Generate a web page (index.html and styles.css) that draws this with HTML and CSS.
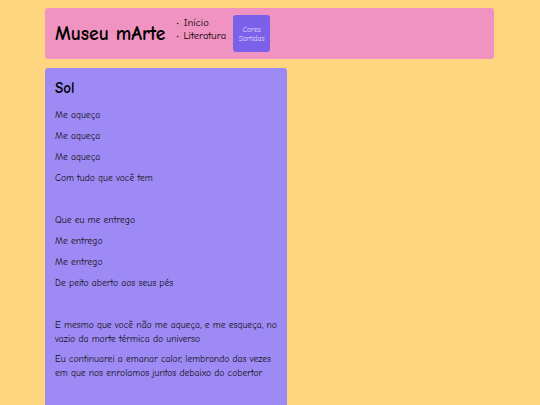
FILE: index.html
```html
<!DOCTYPE html>
<html lang="pt">
<head>
<meta charset="utf-8">
<title>Museu mArte</title>
<link rel="stylesheet" href="styles.css">
</head>
<body>
<header class="topo">
  <h1 class="marca">Museu mArte</h1>
  <ul class="menu">
    <li>Início</li>
    <li>Literatura</li>
  </ul>
  <button class="botao">Cores Sortidas</button>
</header>
<main class="cartao">
  <h2 class="titulo">Sol</h2>
  <p>Me aqueça</p>
  <p>Me aqueça</p>
  <p>Me aqueça</p>
  <p>Com tudo que você tem</p>
  <p class="vazio"></p>
  <p>Que eu me entrego</p>
  <p>Me entrego</p>
  <p>Me entrego</p>
  <p>De peito aberto aos seus pés</p>
  <p class="vazio"></p>
  <p class="longo">E mesmo que você não me aqueça, e me esqueça, no vazio da morte térmica do universo</p>
  <p class="longo">Eu continuarei a emanar calor, lembrando das vezes em que nos enrolamos juntos debaixo do cobertor</p>
</main>
</body>
</html>
```
FILE: styles.css
```css
html, body {
  margin: 0;
  padding: 0;
}
body {
  background: #ffd580;
  font-family: "Comic Sans MS", "Comic Neue", "DejaVu Sans", sans-serif;
  color: #000;
  padding: 8px 46px 0 45px;
  height: 405px;
  box-sizing: border-box;
  overflow: hidden;
}
.topo {
  background: #f093c0;
  border-radius: 3px;
  height: 51px;
  width: 449px;
  box-sizing: border-box;
  display: flex;
  align-items: center;
  padding: 0 10px;
}
.marca {
  margin: 0;
  font-size: 19.5px;
  font-weight: bold;
  color: #000;
}
.menu {
  margin: -8px 0 0 11px;
  padding: 0 0 0 7px;
  font-size: 10.5px;
  line-height: 12px;
  list-style: none;
}
.menu li::before {
  content: "•";
  margin-left: -7px;
  width: 7px;
  display: inline-block;
  font-size: 7px;
}
.botao {
  margin-left: 7px;
  width: 37px;
  height: 37px;
  border: none;
  border-radius: 3px;
  background: #7b61ea;
  color: #e6dcff;
  font-family: inherit;
  font-size: 7.5px;
  line-height: 9px;
  padding: 0 2px;
}
.cartao {
  margin-top: 9px;
  width: 242px;
  height: 337px;
  box-sizing: border-box;
  background: #9e8af5;
  border-radius: 3px 3px 0 0;
  padding: 10px 3px 0 10px;
}
.titulo {
  margin: 0 0 10px;
  font-size: 15px;
  line-height: 20px;
  font-weight: bold;
  color: #000;
}
.cartao p {
  margin: 0 0 7px;
  font-size: 9.6px;
  line-height: 14px;
  color: #111;
}
.cartao p.vazio {
  height: 14px;
}
.cartao p.longo {
  margin-bottom: 6px;
}
```
